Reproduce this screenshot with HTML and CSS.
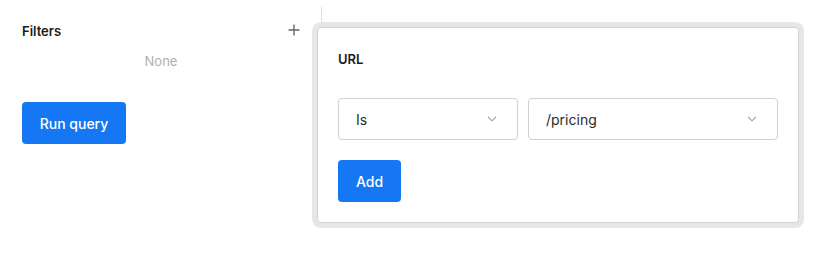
FILE: index.html
```html
<!DOCTYPE html>
<html lang="en">
<head>
<meta charset="utf-8">
<title>Filters</title>
<link rel="stylesheet" href="styles.css">
</head>
<body>
<div class="app">
  <aside class="sidebar">
    <div class="sidebar-head">
      <span class="title">Filters</span>
      <svg class="plus" width="12" height="12" viewBox="0 0 12 12"><path d="M6 0.5V11.5M0.5 6H11.5" stroke="#666" stroke-width="1.4" fill="none"/></svg>
    </div>
    <div class="none">None</div>
    <button class="btn btn-run">Run query</button>
  </aside>
  <main class="main">
    <div class="stub"></div>
    <div class="popover">
      <div class="pop-title">URL</div>
      <div class="row">
        <div class="select select-op">
          <span>Is</span>
          <svg width="10" height="6" viewBox="0 0 10 6"><path d="M1 0.8L5 4.8L9 0.8" stroke="#9a9a9a" stroke-width="1.1" fill="none"/></svg>
        </div>
        <div class="select select-val">
          <span>/pricing</span>
          <svg width="10" height="6" viewBox="0 0 10 6"><path d="M1 0.8L5 4.8L9 0.8" stroke="#9a9a9a" stroke-width="1.1" fill="none"/></svg>
        </div>
      </div>
      <button class="btn btn-add">Add</button>
    </div>
  </main>
</div>
</body>
</html>
```
FILE: styles.css
```css
* { box-sizing: border-box; }
html, body { height: 100%; }
body {
  margin: 0;
  background: #fff;
  font-family: Inter, "Noto Sans", sans-serif;
  color: #222;
}
.app {
  display: flex;
  align-items: flex-start;
  min-height: 100%;
  padding-bottom: 20px;
}
.sidebar {
  width: 321px;
  flex: none;
  padding: 21px 21px 0 22px;
  display: flex;
  flex-direction: column;
  align-items: flex-start;
}
.sidebar-head {
  width: 100%;
  height: 20px;
  display: flex;
  justify-content: space-between;
  align-items: center;
}
.title {
  font-size: 13px;
  font-weight: 600;
  line-height: 20px;
  color: #1a1a1a;
}
.plus { margin-top: -2px; }
.none {
  align-self: stretch;
  text-align: center;
  margin-top: 10px;
  font-size: 13px;
  line-height: 20px;
  color: #b0b0b0;
}
.btn {
  border: none;
  border-radius: 4px;
  background: #1677f5;
  color: #fff;
  font-family: Inter, "Noto Sans", sans-serif;
  font-size: 14px;
  font-weight: 500;
  height: 42px;
  padding: 0;
  cursor: pointer;
}
.btn-run {
  margin-top: 31px;
  width: 104px;
}
.main {
  flex: 1;
  margin-top: 7px;
}
.stub {
  height: 15px;
  border-left: 1px solid #dedede;
}
.popover {
  margin-top: 5px;
  margin-left: -4px;
  width: 482px;
  height: 196px;
  border: 1px solid #d2d2d2;
  border-radius: 4px;
  box-shadow: 0 0 0 5px #e6e6e6;
  background: #fff;
  padding: 21px 19px 20px 20px;
}
.pop-title {
  font-size: 13px;
  font-weight: 600;
  line-height: 20px;
  color: #1a1a1a;
}
.row {
  display: flex;
  gap: 10px;
  margin-top: 29px;
}
.select {
  height: 42px;
  border: 1px solid #d0d0d0;
  border-radius: 4px;
  display: flex;
  align-items: center;
  justify-content: space-between;
  padding: 0 20px 0 17px;
  font-size: 14px;
  color: #2a2a2a;
}
.select-op { width: 180px; }
.select-val { width: 250px; }
.btn-add {
  margin-top: 20px;
  width: 63px;
}
```
